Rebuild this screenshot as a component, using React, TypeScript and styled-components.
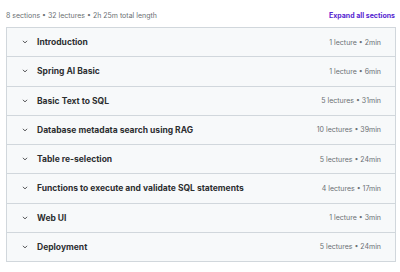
import React from 'react';
import styled, { createGlobalStyle } from 'styled-components';

const sections = [
	{ title: 'Introduction', meta: '1 lecture • 2min' },
	{ title: 'Spring AI Basic', meta: '1 lecture • 6min' },
	{ title: 'Basic Text to SQL', meta: '5 lectures • 31min' },
	{ title: 'Database metadata search using RAG', meta: '10 lectures • 39min' },
	{ title: 'Table re-selection', meta: '5 lectures • 24min' },
	{ title: 'Functions to execute and validate SQL statements', meta: '4 lectures • 17min' },
	{ title: 'Web UI', meta: '1 lecture • 3min' },
	{ title: 'Deployment', meta: '5 lectures • 24min' },
];

const GlobalStyle = createGlobalStyle`
	body {
		margin: 0;
		background: #fff;
		font-family: Inter, 'Noto Sans', sans-serif;
		color: #2d2f31;
	}
`;

const Chevron = () => (
	<svg width='6' height='6' viewBox='0 0 10 10' fill='none'>
		<path d='M2 3.5 L5 6.5 L8 3.5' stroke='#2d2f31' strokeWidth='1.4' strokeLinecap='round' strokeLinejoin='round' />
	</svg>
);

const App = () => (
	<>
		<GlobalStyle />
		<Page>
			<Summary>
				<SummaryText>8 sections • 32 lectures • 2h 25m total length</SummaryText>
				<ExpandLink>Expand all sections</ExpandLink>
			</Summary>
			<List>
				{sections.map(s => (
					<Row key={s.title}>
						<Title>
							<ChevronBox>
								<Chevron />
							</ChevronBox>
							{s.title}
						</Title>
						<Meta>{s.meta}</Meta>
					</Row>
				))}
			</List>
		</Page>
	</>
);

const Page = styled.div`
	width: 400px;
	padding: 9px 4px 0 6px;
	box-sizing: border-box;
`;

const Summary = styled.div`
	display: flex;
	justify-content: space-between;
	align-items: center;
	height: 13px;
	margin-bottom: 5px;
`;

const SummaryText = styled.span`
	font-size: 7px;
	color: #6a6f73;
`;

const ExpandLink = styled.span`
	font-size: 7px;
	font-weight: 700;
	color: #5624d0;
	margin-right: 1px;
`;

const List = styled.div`
	border: 1px solid #d1d7dc;
	border-bottom: none;
`;

const Row = styled.div`
	display: flex;
	align-items: center;
	justify-content: space-between;
	height: 28.25px;
	padding: 0 14px 0 15px;
	background: #f7f9fa;
	border-bottom: 1px solid #d1d7dc;
`;

const Title = styled.div`
	display: flex;
	align-items: center;
	font-size: 8.5px;
	font-weight: 700;
	color: #2d2f31;
`;

const ChevronBox = styled.span`
	display: flex;
	width: 15px;
`;

const Meta = styled.span`
	font-size: 7px;
	color: #6a6f73;
`;

export default App;
